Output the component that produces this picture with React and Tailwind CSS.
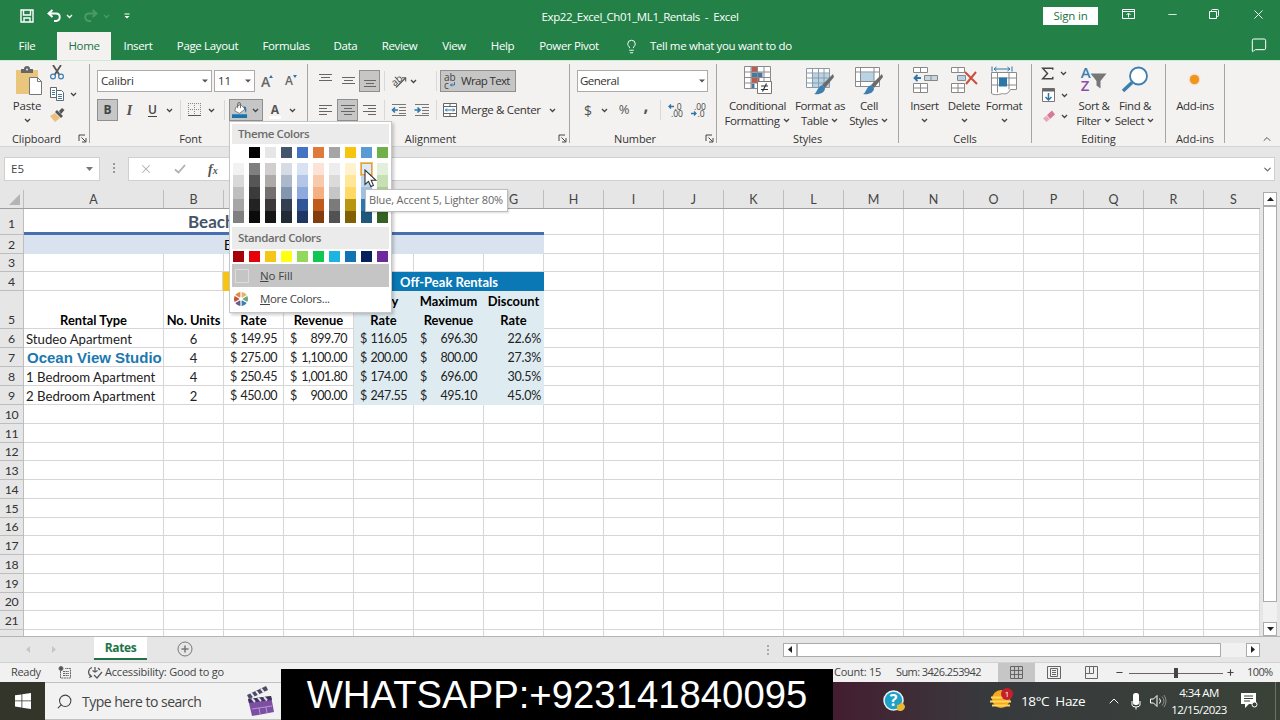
import { ChevronDown, ChevronUp, Lightbulb, MessageSquare, Minus, Plus, Search, X } from 'lucide-react'

const tabs = [
  ['File', 'w-[54px] mr-[3px] text-white'],
  ['Home', 'w-[54px] bg-[#f3f2f1] text-[#217346] font-medium'],
  ['Insert', 'w-[54px] text-white'],
  ['Page Layout', 'w-[85px] text-white'],
  ['Formulas', 'w-[72px] text-white'],
  ['Data', 'w-[47px] text-white'],
  ['Review', 'w-[61px] text-white'],
  ['View', 'w-[48px] text-white'],
  ['Help', 'w-[49px] text-white'],
  ['Power Pivot', 'w-[84px] text-white'],
]

const themeColors = [
  ['#ffffff', '#f2f2f2', '#d9d9d9', '#bfbfbf', '#a6a6a6', '#808080'],
  ['#000000', '#7f7f7f', '#565656', '#3b3b3b', '#222222', '#0b0b0b'],
  ['#e7e6e6', '#d0cece', '#aeaaa8', '#757070', '#3a3838', '#171616'],
  ['#44546a', '#d6dce4', '#acb9ca', '#8296b0', '#333f4f', '#222b35'],
  ['#4472c4', '#d9e2f3', '#b4c6e7', '#8ea9db', '#305496', '#203764'],
  ['#e07a3c', '#fbe4d5', '#f7caac', '#f4b083', '#c05a1a', '#833c0b'],
  ['#a5a5a5', '#ededed', '#dbdbdb', '#c6c6c6', '#7b7b7b', '#525252'],
  ['#f7c40e', '#fff2cc', '#ffe699', '#ffd966', '#b8960f', '#806000'],
  ['#5b9bd5', '#ddebf7', '#bdd7ee', '#9bc2e6', '#2f75b5', '#1f5878'],
  ['#70b04a', '#e2efda', '#c6e0b4', '#a9d08e', '#548235', '#356223'],
]

const standardColors = ['#a80008', '#e6000a', '#f5c518', '#ffff12', '#92d85a', '#12c653', '#1cb4e0', '#1173b4', '#06205c', '#6c2a9a']

const moreCols = ['H', 'I', 'J', 'K', 'L', 'M', 'N', 'O', 'P', 'Q', 'R']

const rentals = [
  [6, 'Studeo Apartment', '6', '149.95', '899.70', '116.05', '696.30', '22.6%'],
  [7, 'Ocean View Studio', '4', '275.00', '1,100.00', '200.00', '800.00', '27.3%'],
  [8, '1 Bedroom Apartment', '4', '250.45', '1,001.80', '174.00', '696.00', '30.5%'],
  [9, '2 Bedroom Apartment', '2', '450.00', '900.00', '247.55', '495.10', '45.0%'],
]

const Chev = ({ className = 'w-4' }) => (
  <span className={`flex justify-center shrink-0 ${className}`}>
    <svg width="7" height="5" viewBox="0 0 7 5" fill="none" stroke="#444" strokeWidth="1.3"><path d="M1 1l2.5 2.5L6 1" /></svg>
  </span>
)

const Caret = () => (
  <svg width="6" height="4" viewBox="0 0 6 4" fill="#555"><path d="M0 0.5h6L3 3.5z" /></svg>
)

const Launcher = () => (
  <svg width="9" height="9" viewBox="0 0 9 9" fill="none" stroke="#444"><path d="M1 7V1h6M3.5 3.5L7.5 7.5M8 4v4H4" /></svg>
)

const Sep = ({ className = '' }) => <div className={`w-px h-5 shrink-0 bg-[#d8d8d8] ${className}`} />

function Group({ label, launcher, className, children }) {
  return (
    <div className={`flex shrink-0 pt-[3px] ${className}`}>
      <div className="flex flex-col flex-1 min-w-0">
        <div className="h-[67px]">{children}</div>
        <div className="flex items-center h-[15px]">
          <span className="flex-1 text-center text-[11px] leading-none tracking-[-0.1px] text-[#333] whitespace-nowrap">{label}</span>
          {launcher && <span className="w-[16px] pl-[5px]"><Launcher /></span>}
        </div>
      </div>
      <div className="w-px h-[79px] bg-[#a5a5a5]" />
    </div>
  )
}

function Big({ icon, lines, chev = 'inline', className }) {
  return (
    <div className={`flex flex-col items-center shrink-0 text-[11.5px] leading-[15px] tracking-[-0.4px] text-[#333] whitespace-nowrap ${className}`}>
      <div className="h-[34px] pt-[2px]">{icon}</div>
      <span>{lines[0]}</span>
      {chev === 'below' && <span className="h-[15px] flex items-center"><Chev /></span>}
      {chev === 'inline' && <span className="flex items-center">{lines[1]}<Chev className="w-[9px] ml-[2px]" /></span>}
    </div>
  )
}

const Lines = ({ rows }) => (
  <svg width="14" height="16" viewBox="0 0 14 16" stroke="#666" strokeWidth="1">
    {rows.map(([x, y, w], i) => <path key={i} d={`M${x} ${y + 0.5}h${w}`} />)}
  </svg>
)

const DentIcon = ({ out }) => (
  <svg width="16" height="14" viewBox="0 0 16 14" fill="none">
    <path d="M1 1.5h14M8 4.5h7M8 7.5h7M8 10.5h7M1 12.5h14" stroke="#777" />
    <path d={out ? 'M7 7H1.5M4 4.5L1.5 7L4 9.5' : 'M0.5 7H6M3.5 4.5L6 7L3.5 9.5'} stroke="#2e75a8" strokeWidth="1.6" />
  </svg>
)

const Brush = () => (
  <>
    <path d="M27 8L28 11L19 22L16 19z" fill="#6b6b6b" />
    <path d="M16 19l3 3c0 5-6 7-11 6c3-1 3-7 8-9z" fill="#3d7fb0" />
  </>
)

const ClipboardGroup = () => (
  <Group label="Clipboard" launcher className="w-[90px]">
    <div className="flex pl-[9px]">
      <div className="w-9 flex flex-col items-center text-[11.5px] leading-[15px] tracking-[-0.2px] text-[#333]">
        <svg width="28" height="30" viewBox="0 0 28 30" className="mt-[2px] ml-[4px]">
          <path d="M1 4h22v24H1z" fill="#e9c67c" />
          <path d="M6 3h3a3 3 0 016 0h3v4H6z" fill="#666" />
          <circle cx="12" cy="3.5" r="1" fill="#eee" />
          <path d="M14.5 11.5h8l4 4v13h-12z" fill="#fff" stroke="#777" />
          <path d="M22.5 11.5v4h4" fill="none" stroke="#777" />
        </svg>
        <span className="mt-[2px]">Paste</span>
        <span className="h-[14px] flex items-center"><Chev /></span>
      </div>
      <div className="flex flex-col ml-[4px] gap-[7px] pt-[1px]">
        <svg width="16" height="15" viewBox="0 0 16 15" fill="none">
          <path d="M4 0l6.5 10M12 0L5.5 10" stroke="#555" strokeWidth="1.8" />
          <circle cx="4" cy="11.5" r="2.4" stroke="#3d7fb0" strokeWidth="1.2" />
          <circle cx="12" cy="11.5" r="2.4" stroke="#3d7fb0" strokeWidth="1.2" />
        </svg>
        <div className="flex items-center">
          <svg width="16" height="14" viewBox="0 0 16 14" fill="#fff" stroke="#666">
            <path d="M1.5 0.5h6v10h-6z" />
            <path d="M3 3.5h3M3 5.5h3M3 7.5h3" stroke="#3d7fb0" />
            <path d="M7.5 3.5h5l2 2v8h-7z" />
            <path d="M9 7.5h4M9 9.5h4M9 11.5h4" stroke="#3d7fb0" />
          </svg>
          <Chev />
        </div>
        <svg width="16" height="14" viewBox="0 0 16 14">
          <path d="M1 8l5-3l5 5l-5 4z" fill="#ecbf7d" />
          <path d="M6 4l2-2l6 6l-2 2zM10 3l3-3l2.5 2L12 6z" fill="#555" />
        </svg>
      </div>
    </div>
  </Group>
)

const FontGroup = () => (
  <Group label="Font" launcher className="w-[218px]">
    <div className="flex items-center h-[22px] mt-[6px] ml-[7px] text-[12px] text-[#333]">
      <div className="flex items-center justify-between w-[115px] h-[22px] px-[3px] bg-white border border-[#ababab] text-[11.5px] tracking-[-0.2px]">Calibri<Caret /></div>
      <div className="flex items-center justify-between w-[41px] h-[22px] px-[3px] ml-[2px] bg-white border border-[#ababab] text-[11.5px]">11<Caret /></div>
      <span className="flex items-center w-[25px] pl-[6px] text-[14px] font-semibold text-[#666]">A<svg width="4" height="3" fill="#2e75a8" className="-ml-px mb-[10px]"><path d="M0 3h4L2 0z" /></svg></span>
      <span className="flex items-center w-[20px] pl-[5px] text-[12px] font-semibold text-[#666]">A<svg width="4" height="3" fill="#2e75a8" className="mb-[10px]"><path d="M0 0h4L2 3z" /></svg></span>
    </div>
    <div className="flex items-center h-[22px] mt-[7px] ml-[7px] text-[13px] text-[#444]">
      <div className="flex items-center justify-center w-[21px] h-[22px] bg-[#c6c6c6] border border-[#8f8f8f] font-bold text-[12px]">B</div>
      <span className="w-[23px] text-center font-['Liberation_Serif'] text-[15px] italic font-semibold text-[#555]">I</span>
      <span className="w-[23px] text-center text-[12px] font-semibold underline underline-offset-2">U</span>
      <Chev className="w-[11px]" />
      <Sep className="ml-[5px]" />
      <svg width="14" height="14" viewBox="0 0 14 14" fill="none" stroke="#888" strokeDasharray="1 1" className="ml-[7px]">
        <path d="M.5 0v13M6.5 0v13M12.5 0v13M0 .5h13M0 6.5h13" />
        <path d="M0 12.500h13" stroke="#555" strokeDasharray="none" />
      </svg>
      <Chev className="w-[18px]" />
      <Sep className="ml-[4px]" />
      <div className="flex items-center w-[34px] h-[22px] ml-[4px] pl-[2px] bg-[#c6c6c6] border border-[#8f8f8f] shrink-0">
        <svg width="17" height="17" viewBox="0 0 17 17">
          <path d="M4 5l5-3l5 5l-6 4.500L3 9z" fill="#fff" stroke="#666" strokeWidth=".8" />
          <path d="M6 6V1.500a1.500 1.500 0 013 0V6" fill="none" stroke="#666" />
          <path d="M12.500 4c3 0 3 3 2.500 7c-1.500-1-1-4-2.500-5z" fill="#2e75a8" />
          <path d="M0 12.500h16v4H0z" fill="#1874ad" />
        </svg>
        <Chev className="w-[14px]" />
      </div>
      <span className="relative w-[24px] text-center text-[12px] font-bold text-[#555]">A<i className="absolute left-[6px] bottom-0 w-3 h-[3px] bg-white" /></span>
      <Chev className="w-[10px]" />
    </div>
  </Group>
)

const AlignmentGroup = () => (
  <Group label="Alignment" launcher className="w-[262px]">
    <div className="flex items-center h-[22px] mt-[6px] ml-[6px]">
      <span className="w-[22px] flex justify-center"><Lines rows={[[1, 1, 13], [3, 4, 9], [1, 7, 13]]} /></span>
      <span className="w-[23px] flex justify-center"><Lines rows={[[1, 4, 13], [3, 7, 9], [1, 10, 13]]} /></span>
      <span className="flex items-center justify-center w-[21px] h-[22px] bg-[#c6c6c6] border border-[#8f8f8f]"><Lines rows={[[1, 7, 12], [3, 10, 8], [1, 13, 12]]} /></span>
      <Sep className="ml-[4px]" />
      <svg width="16" height="16" viewBox="0 0 16 16" className="ml-[6px] overflow-visible">
        <text x="0" y="10" fontSize="10" fill="#444" transform="rotate(-40 6 9) translate(1 1)">ab</text>
        <path d="M5 14.500L14.500 5M11 4.800l3.700 0v3.700" fill="none" stroke="#555" strokeWidth="1.1" />
      </svg>
      <Chev className="w-[13px]" />
      <Sep className="ml-[16px]" />
      <div className="flex items-center w-[76px] h-[22px] ml-[3px] pl-[3px] bg-[#c6c6c6] border border-[#8f8f8f] text-[11.5px] tracking-[-0.65px] text-[#333] whitespace-nowrap">
        <span className="flex flex-col w-[15px] mr-[2px] text-[10px] leading-[8px] text-[#444] tracking-normal"><span>ab</span><span className="flex">c<svg width="5" height="6" fill="none" stroke="#2e75a8" className="mt-px ml-px"><path d="M4.500 0v3H.5M2 1.500L.5 3L2 4.500" /></svg></span></span>
        Wrap Text
      </div>
    </div>
    <div className="flex items-center h-[22px] mt-[7px] ml-[6px]">
      <span className="w-[22px] flex justify-center"><Lines rows={[[1, 3, 13], [1, 6, 8], [1, 9, 13], [1, 12, 8]]} /></span>
      <span className="flex items-center justify-center w-[21px] h-[22px] ml-px bg-[#c6c6c6] border border-[#8f8f8f]"><Lines rows={[[0, 3, 14], [3, 6, 8], [0, 9, 14], [3, 12, 8]]} /></span>
      <span className="w-[23px] flex justify-center"><Lines rows={[[0, 3, 13], [5, 6, 8], [0, 9, 13], [5, 12, 8]]} /></span>
      <Sep className="ml-[3px]" />
      <span className="w-[28px] flex justify-center"><DentIcon out /></span>
      <span className="w-[18px] flex justify-center"><DentIcon /></span>
      <Sep className="ml-[5px]" />
      <svg width="15" height="15" viewBox="0 0 15 15" fill="#fff" stroke="#666" className="ml-[6px]">
        <path d="M.5 .5h13v13H.5zM.5 3.500h13M.5 10.500h13M7 .5v3M7 10.500v3" />
        <path d="M2 7h10M4 5.500L2.500 7L4 8.500M10 5.500L11.500 7L10 8.500" stroke="#2e75a8" fill="none" />
      </svg>
      <span className="w-[81px] ml-[3px] text-[11.5px] tracking-[-0.35px] text-[#333] whitespace-nowrap">Merge &amp; Center</span>
      <Chev className="w-[20px]" />
    </div>
  </Group>
)

const NumberGroup = () => (
  <Group label="Number" launcher className="w-[147px]">
    <div className="flex items-center justify-between w-[131px] h-[22px] mt-[6px] ml-[7px] px-[2px] bg-white border border-[#ababab] text-[11.5px] tracking-[-0.5px] text-[#333]">General<Caret /></div>
    <div className="flex items-center h-[22px] mt-[7px] ml-[7px] text-[14px] text-[#555]">
      <span className="w-[22px] text-center text-[14px]">$</span>
      <Chev className="w-[10px]" />
      <span className="w-[30px] text-center text-[13px]">%</span>
      <span className="w-[14px] text-center text-[17px] font-bold leading-[10px] pb-[8px]">,</span>
      <Sep className="ml-[7px]" />
      <span className="w-[28px] flex flex-col items-center text-[8.5px] leading-[7px] text-[#444]"><span className="flex items-center"><svg width="6" height="5" fill="none" stroke="#2e75a8" strokeWidth="1.300"><path d="M6 2.500H1M3 .5l-2 2l2 2" /></svg>.0</span><span className="pl-1">.00</span></span>
      <span className="w-[18px] flex flex-col items-center text-[8.5px] leading-[7px] text-[#444]"><span className="pl-1">.00</span><span className="flex items-center"><svg width="6" height="5" fill="none" stroke="#2e75a8" strokeWidth="1.300"><path d="M0 2.500h5M3 .5l2 2l-2 2" /></svg>.0</span></span>
    </div>
  </Group>
)

const StylesGroup = () => (
  <Group label="Styles" className="w-[182px]">
    <div className="flex pl-[7px]">
      <Big className="w-[67px]" lines={['Conditional', 'Formatting']} icon={
        <svg width="28" height="29" viewBox="0 0 28 29">
          <path d="M.5 .5h26v22H.5z" fill="#fff" />
          <path d="M7.500 1h6v5h-6zM7.500 12h8v5h-8z" fill="#c25a4b" />
          <path d="M7.500 6.500h11v5h-11zM7.500 17.500h3v5h-3z" fill="#4479a4" />
          <path d="M.5 .5h26v22H.5zM.5 6h26M.5 11.500h26M.5 17h26M7 .5v22M13.500 .5v22M20 .5v22" fill="none" stroke="#8a8a8a" />
          <path d="M13.500 15.500h14v12h-14z" fill="#fff" stroke="#777" />
          <path d="M17 20h7M17 23.500h7M22.500 17.500l-4 8" stroke="#333" strokeWidth="1.2" />
        </svg>} />
      <Big className="w-[58px]" lines={['Format as', 'Table']} icon={
        <svg width="28" height="29" viewBox="0 0 28 29">
          <path d="M.5 2.500h23v19H.5z" fill="#fff" />
          <path d="M6.500 7.500h17v14h-17z" fill="#b9d3e6" />
          <path d="M.5 2.500h23v19H.5zM.5 7h23M.5 12h23M.5 17h23M6.500 2.500v19M12.500 2.500v19M18 2.500v19" fill="none" stroke="#8a9aa8" />
          <Brush />
        </svg>} />
      <Big className="w-[40px]" lines={['Cell', 'Styles']} icon={
        <svg width="28" height="29" viewBox="0 0 28 29">
          <path d="M.5 1.500h24v19H.5z" fill="#fff" />
          <path d="M6 6.500h13v9H6z" fill="#b9d3e6" />
          <path d="M.5 1.500h24v19H.5zM.5 6h24M.5 15.500h24M5.500 1.500v19M19 1.500v19" fill="none" stroke="#8a8a8a" />
          <Brush />
        </svg>} />
    </div>
  </Group>
)

const CellsGroup = () => (
  <Group label="Cells" className="w-[133px]">
    <div className="flex pl-[6px]">
      <Big className="w-[39px]" chev="below" lines={['Insert']} icon={
        <svg width="26" height="28" viewBox="0 0 26 28" fill="#fff" stroke="#888">
          <path d="M1.500 1.500h14v5h-14zM8.500 1.500v5M1.500 17.500h14v9h-14zM8.500 17.500v9M1.500 22h14" />
          <path d="M12.500 9.500h13v5h-13zM19 9.500v5" fill="#c6d6e2" />
          <path d="M9 12H2.500M5.500 9L2.500 12l3 3" stroke="#2e75a8" strokeWidth="1.800" fill="none" />
        </svg>} />
      <Big className="w-[40px]" chev="below" lines={['Delete']} icon={
        <svg width="28" height="28" viewBox="0 0 28 28" fill="#fff" stroke="#888">
          <path d="M1.500 1.500h13v5h-13zM8 1.500v5M1.500 17.500h13v9h-13zM8 17.500v9M1.500 22h13" />
          <path d="M7.500 9.500h8v5h-8z" fill="#b9d3e6" />
          <path d="M15 6l12 12M26 6L16 18" stroke="#c8503c" strokeWidth="2" />
        </svg>} />
      <Big className="w-[40px]" chev="below" lines={['Format']} icon={
        <svg width="28" height="30" viewBox="0 0 28 30" fill="#fff" stroke="#8a8a8a">
          <path d="M1.500 6.500h25v17h-6c-2 4-5 5-8 4c-3 1-8 2-11 0z" />
          <path d="M1.500 12h25M1.500 19h25M7.500 6.500v20M19 6.500v17" />
          <path d="M9 11.500h8v9H9z" fill="#2e75a8" stroke="none" />
          <path d="M2 .5v5M22 .5v5M4 3h16M6.500 1L4 3l2.500 2M17.500 1L20 3l-2.500 2" fill="none" stroke="#2e75a8" />
        </svg>} />
    </div>
  </Group>
)

const EditingGroup = () => (
  <Group label="Editing" className="w-[134px]">
    <div className="flex pl-[9px]">
      <div className="flex flex-col w-[32px] shrink-0 pt-[2px]">
        <div className="flex items-center h-[15px]">
          <svg width="16" height="15" viewBox="0 0 16 15" fill="none" stroke="#444" strokeWidth="1.800"><path d="M14.500 3V1H2l6 6.500L2 14h12.500v-2.500" /></svg>
          <Chev className="w-[19px]" />
        </div>
        <div className="flex items-center h-[15px] mt-[7px]">
          <svg width="14" height="15" viewBox="0 0 14 15" fill="#fff" className="ml-px">
            <path d="M.5 .5h12v13H.5z" stroke="#777" />
            <path d="M.5 .5h12v3H.5z" fill="#666" />
            <path d="M6.500 5v7M3.500 9l3 3l3-3" stroke="#2e75a8" strokeWidth="1.500" fill="none" />
          </svg>
          <Chev className="w-[16px]" />
        </div>
        <div className="flex items-center h-[14px] mt-[6px]">
          <svg width="14" height="13" viewBox="0 0 14 13" className="ml-px">
            <path d="M5 5l5-4.500l3 4l-5 4.500z" fill="#d67a98" />
            <path d="M1 8.500L4.500 5.500L7.500 9.500L4.500 12z" fill="#e6a9bb" />
          </svg>
          <Chev className="w-[16px]" />
        </div>
      </div>
      <Big className="w-[42px]" lines={['Sort &', 'Filter']} icon={
        <div className="flex">
          <div className="flex flex-col text-[15px] leading-[13px] font-semibold"><span className="text-[#3d7fb0]">A</span><span className="text-[#8a4fa8]">Z</span></div>
          <svg width="17" height="16" viewBox="0 0 17 16" className="mt-[7px]"><path d="M.5 .5h16L10.500 8v7.500l-4-3V8z" fill="#777" /></svg>
        </div>} />
      <Big className="w-[40px]" lines={['Find &', 'Select']} icon={
        <svg width="28" height="27" viewBox="0 0 28 27" fill="none" stroke="#3d7fb0">
          <circle cx="17.500" cy="10" r="8.500" fill="#fff" strokeWidth="1.800" />
          <path d="M11 16.500L2 25" strokeWidth="3.500" />
        </svg>} />
    </div>
  </Group>
)

const TitleBar = () => (
  <div className="flex items-center h-8 text-[11.5px] text-white">
    <svg width="14" height="14" viewBox="0 0 14 14" fill="none" stroke="#fff" strokeWidth="1.400" className="ml-[20px]"><path d="M1 1h12v12H1zM3.500 1v5h7V1M4 13V9h6v4" /></svg>
    <svg width="15" height="14" viewBox="0 0 15 14" fill="none" stroke="#fff" strokeWidth="1.900" className="ml-[13px]"><path d="M5.500 1L1.500 4.500L5.500 8M2 4.500h7c5 0 5 7 0 7.500H7" /></svg>
    <svg width="7" height="5" viewBox="0 0 7 5" fill="none" stroke="#fff" strokeWidth="1.300" className="ml-[4px]"><path d="M1 1l2.500 2.500L6 1" /></svg>
    <svg width="15" height="14" viewBox="0 0 15 14" fill="none" stroke="#4b9a68" strokeWidth="1.900" className="ml-[10px]"><path d="M9.500 1l4 3.500l-4 3.500M13 4.500H6c-5 0-5 7 0 7.500h2" /></svg>
    <svg width="7" height="5" viewBox="0 0 7 5" fill="none" stroke="#4b9a68" strokeWidth="1.300" className="ml-[5px]"><path d="M1 1l2.500 2.500L6 1" /></svg>
    <svg width="6" height="7" viewBox="0 0 6 7" fill="#fff" className="ml-[14px]"><path d="M.5 .5h5v1h-5zM.5 3h5L3 5.500z" /></svg>
    <div className="w-[280px] ml-[370px] pt-px text-center tracking-[-0.420px] whitespace-pre">Exp22_Excel_Ch01_ML1_Rentals  -  Excel</div>
    <div className="flex items-center justify-center w-[55px] h-[18px] ml-auto mr-[24px] bg-white text-[#217346] font-medium tracking-[-0.200px]">Sign in</div>
    <svg width="13" height="11" viewBox="0 0 13 11" fill="none" stroke="#fff" className="mr-[31px] mb-[3px]"><path d="M.5 .5h12v9H.5zM.5 2.500h12M6.500 8.500V4.500M4.500 6l2-2l2 2" /></svg>
    <Minus size={13} strokeWidth={1.500} className="mr-[30px] mb-[3px]" />
    <svg width="11" height="11" viewBox="0 0 11 11" fill="none" stroke="#fff" className="mr-[31px] mb-[3px]"><path d="M.5 2.500h7v7h-7zM2.500 2.500V1.500q0-1 1-1h5q1 0 1 1v5q0 1-1 1h-1" /></svg>
    <X size={15} strokeWidth={1.500} className="mr-[14px] mb-[3px]" />
  </div>
)

const TabRow = () => (
  <div className="flex items-stretch h-7 text-[11.5px] tracking-[-0.350px]">
    {tabs.map(([t, cls]) => (
      <div key={t} className={`flex items-center justify-center whitespace-nowrap ${cls}`}>{t}</div>
    ))}
    <div className="flex items-center text-white">
      <Lightbulb size={15} strokeWidth={1.500} className="ml-[13px] mr-[11px]" />
      Tell me what you want to do
    </div>
    <MessageSquare size={16} strokeWidth={1.500} className="ml-auto mr-[13px] mt-[5px] text-white" />
  </div>
)

const FormulaBar = () => (
  <div className="flex items-start h-[43px] pt-[10px] pl-[4px] bg-[#e6e6e6]">
    <div className="flex items-center justify-between w-[96px] h-6 px-[6px] bg-white border border-[#d0d0d0] text-[11.500px] text-[#444]">
      E5
      <svg width="7" height="4" viewBox="0 0 7 4" fill="#777"><path d="M0 0h7L3.500 4z" /></svg>
    </div>
    <svg width="3" height="12" viewBox="0 0 3 12" fill="#999" className="mt-[6px] ml-[13px]"><path d="M0 0h2v2H0zM0 4h2v2H0zM0 8h2v2H0z" /></svg>
    <div className="flex items-center w-[1147px] h-6 ml-[12px] bg-white border border-[#d0d0d0]">
      <X size={14} strokeWidth={1.800} className="ml-[10px] text-[#b0b0b0]" />
      <svg width="12" height="10" viewBox="0 0 12 10" fill="none" stroke="#b0b0b0" strokeWidth="1.800" className="ml-[21px]"><path d="M1 5.500l3.500 3L11 1" /></svg>
      <span className="ml-[22px] font-['Liberation_Serif'] text-[14px] italic font-bold text-[#555]">f<span className="text-[10px]">x</span></span>
      <ChevronDown size={11} strokeWidth={2.500} className="ml-auto mr-[1px] text-[#666]" />
    </div>
  </div>
)

const RowHead = ({ children }) => (
  <div className="flex items-end justify-center w-6 shrink-0 border-r border-b border-[#bdbdbd] text-[12.300px] leading-[16px] tracking-[-0.300px] text-[#333]">{children}</div>
)

const Blank = ({ className }) => <div className={`shrink-0 border-r border-b border-[#d6d6d6] ${className}`} />

// H to R plus the clipped column S
const Rest = () => (
  <>
    {moreCols.map((c) => <Blank key={c} className="w-[60px]" />)}
    <Blank className="w-[56px]" />
  </>
)

const Head = ({ top, bottom, className }) => (
  <div className={`flex flex-col items-center shrink-0 pt-px border-r border-b font-bold text-black leading-[19px] whitespace-nowrap ${className}`}>
    <span className="h-[19px]">{top}</span>
    <span className="h-[17px]">{bottom}</span>
  </div>
)

const Money = ({ value, className }) => (
  <div className={`flex items-end justify-between shrink-0 border-r border-b pr-[6px] text-[12.500px] tracking-[-0.450px] ${className}`}>
    <span>$</span>
    <span>{value}</span>
  </div>
)

const PLAIN = 'border-[#d6d6d6]'
const TINT = 'bg-[#deecf2] border-[#deecf2]'

const Sheet = () => (
  <div className="flex h-[446px] bg-[#e6e6e6]">
    <div className="w-[1260px] overflow-hidden font-['Lato','Liberation_Sans',sans-serif] text-[13px] leading-[16px]">
      <div className="flex h-[19px] border-b border-[#9e9e9e] text-[12.500px] leading-[19px] text-[#444]">
        <div className="flex items-end justify-end w-6 p-[3px] border-r border-[#bdbdbd]">
          <svg width="11" height="11" viewBox="0 0 11 11" fill="#b5b5b5"><path d="M11 0v11H0z" /></svg>
        </div>
        <div className="w-[140px] text-center border-r border-[#bdbdbd]">A</div>
        <div className="w-[60px] text-center border-r border-[#bdbdbd]">B</div>
        <div className="w-[60px] border-r border-[#bdbdbd]" />
        <div className="w-[70px] border-r border-[#bdbdbd]" />
        <div className="w-[60px] border-r border-[#bdbdbd]" />
        <div className="w-[70px] border-r border-[#bdbdbd]" />
        <div className="w-[60px] text-center border-r border-[#bdbdbd]">G</div>
        {moreCols.map((c) => <div key={c} className="w-[60px] text-center border-r border-[#bdbdbd]">{c}</div>)}
        <div className="w-[56px] pl-[3px] text-center">S</div>
      </div>
      <div className="flex h-[26px]">
        <RowHead><span className="mb-[2px]">1</span></RowHead>
        <div className="w-[520px] shrink-0 pl-[164px] pt-[5px] bg-white border-b-[3px] border-[#4a6fb0] text-[17px] font-bold text-[#44546a]">Beach</div>
        <div className="flex bg-white"><Rest /></div>
      </div>
      <div className="flex h-[19px]">
        <RowHead>2</RowHead>
        <div className="w-[520px] shrink-0 pl-[200px] pt-[2px] bg-[#d9e2ef] text-black">E</div>
        <div className="flex bg-white"><Rest /></div>
      </div>
      <div className="flex h-[18px]">
        <RowHead>3</RowHead>
        <div className="flex bg-white">
          <Blank className="w-[140px]" /><Blank className="w-[60px]" /><Blank className="w-[60px]" /><Blank className="w-[70px]" />
          <Blank className="w-[60px]" /><Blank className="w-[70px]" /><Blank className="w-[60px]" />
          <Rest />
        </div>
      </div>
      <div className="flex h-[19px]">
        <RowHead>4</RowHead>
        <div className="flex bg-white">
          <Blank className="w-[140px]" /><Blank className="w-[59px]" />
          <div className="w-[131px] bg-[#f7c40e]" />
          <div className="flex items-end justify-center w-[190px] pb-px bg-[#0a78b5] font-bold text-white text-[13px]">Off-Peak Rentals</div>
          <Rest />
        </div>
      </div>
      <div className="flex h-[38px]">
        <RowHead>5</RowHead>
        <div className="flex bg-white text-[12.900px]">
          <Head bottom="Rental Type" className="w-[140px] border-[#d6d6d6]" />
          <Head bottom="No. Units" className="w-[60px] border-[#d6d6d6]" />
          <Head bottom="Rate" className="w-[60px] border-[#d6d6d6]" />
          <Head bottom="Revenue" className="w-[70px] border-[#d6d6d6]" />
          <Head top="Daily" bottom="Rate" className="w-[60px] border-[#deecf2] bg-[#deecf2]" />
          <Head top="Maximum" bottom="Revenue" className="w-[70px] border-[#deecf2] bg-[#deecf2]" />
          <Head top="Discount" bottom="Rate" className="w-[60px] border-[#deecf2] bg-[#deecf2]" />
          <Rest />
        </div>
      </div>
      {rentals.map(([n, name, units, daily, max, offDaily, offMax, disc]) => (
        <div key={n} className="flex h-[19px] text-[#222]">
          <RowHead>{n}</RowHead>
          <div className="flex bg-white">
            <div className={`flex items-end w-[140px] shrink-0 border-r border-b border-[#d6d6d6] whitespace-nowrap ${n === 7 ? "font-['Liberation_Sans'] font-bold text-[15px] text-[#1c78b0] pl-[3px]" : 'pl-[2px] text-[13.200px]'}`}>{name}</div>
            <div className="flex items-end justify-center w-[60px] shrink-0 border-r border-b border-[#d6d6d6]">{units}</div>
            <Money value={daily} className={`w-[60px] pl-[6px] ${PLAIN}`} />
            <Money value={max} className={`w-[70px] pl-[6px] ${PLAIN}`} />
            <Money value={offDaily} className={`w-[60px] pl-[6px] ${TINT}`} />
            <Money value={offMax} className={`w-[70px] pl-[6px] ${TINT}`} />
            <div className={`flex items-end justify-end w-[60px] shrink-0 pr-[2px] border-r border-b text-[12.500px] tracking-[-0.250px] ${TINT}`}>{disc}</div>
            <Rest />
          </div>
        </div>
      ))}
      {[10, 11, 12, 13, 14, 15, 16, 17, 18, 19, 20, 21, 22].map((n) => (
        <div key={n} className="flex h-[18.750px]">
          <RowHead>{n < 22 ? n : ''}</RowHead>
          <div className="flex bg-white">
            <Blank className="w-[140px]" /><Blank className="w-[60px]" /><Blank className="w-[60px]" /><Blank className="w-[70px]" />
            <Blank className="w-[60px]" /><Blank className="w-[70px]" /><Blank className="w-[60px]" />
            <Rest />
          </div>
        </div>
      ))}
    </div>
    <div className="flex flex-col w-[14px] ml-[3px] pt-[2px]">
      <div className="flex items-center justify-center h-[14px] bg-white border border-[#ababab]"><svg width="7" height="4" fill="#222"><path d="M0 4h7L3.500 0z" /></svg></div>
      <div className="h-[396px] bg-white border border-[#ababab]" />
      <div className="flex-1 bg-[#f1f1f1]" />
      <div className="flex items-center justify-center h-[14px] bg-white border border-[#ababab]"><svg width="7" height="4" fill="#222"><path d="M0 0h7L3.500 4z" /></svg></div>
    </div>
  </div>
)

const SheetTabs = () => (
  <div className="flex items-center h-[26px] bg-[#e6e6e6] border-t border-[#b5b5b5]">
    <svg width="4" height="7" fill="#c6c6c6" className="ml-[26px]"><path d="M4 0v7L0 3.500z" /></svg>
    <svg width="4" height="7" fill="#c6c6c6" className="ml-[22px]"><path d="M0 0v7L4 3.500z" /></svg>
    <div className="flex items-center justify-center self-start w-[53px] h-[23px] ml-[38px] bg-white border-b-2 border-[#217346] text-[12px] tracking-[-0.400px] font-bold text-[#217346]">Rates</div>
    <svg width="16" height="16" viewBox="0 0 16 16" fill="none" stroke="#777" className="ml-[30px] mb-px"><circle cx="8" cy="8" r="7" /><path d="M8 4.500v7M4.500 8h7" strokeWidth="1.500" /></svg>
    <svg width="3" height="10" fill="#aaa" className="ml-auto mr-[13px]"><path d="M0 0h2v2H0zM0 4h2v2H0zM0 8h2v2H0z" /></svg>
    <div className="flex items-center justify-center w-[14px] h-[14px] bg-white border border-[#ababab]"><svg width="4" height="7" fill="#222"><path d="M4 0v7L0 3.500z" /></svg></div>
    <div className="w-[424px] h-[14px] bg-white border border-[#ababab]" />
    <div className="w-[25px] h-[14px] bg-[#f1f1f1]" />
    <div className="flex items-center justify-center w-[14px] h-[14px] mr-[20px] bg-white border border-[#ababab]"><svg width="4" height="7" fill="#222"><path d="M0 0v7L4 3.500z" /></svg></div>
  </div>
)

const StatusBar = () => (
  <div className="flex items-center h-5 bg-[#f1f1f1] border-t border-[#d2d2d2] text-[11px] text-[#444] whitespace-nowrap">
    <span className="w-[46px] pl-[11px] tracking-[-0.300px]">Ready</span>
    <svg width="14" height="13" viewBox="0 0 14 13" fill="none" stroke="#666" className="ml-[12px]">
      <path d="M2.500 5v7h10V2.500H7M5 5.500h6M5 7.500h6M5 9.500h6" strokeDasharray="2 .6" /><circle cx="3" cy="2.500" r="2" fill="#555" />
    </svg>
    <svg width="16" height="13" viewBox="0 0 16 13" fill="none" stroke="#555" strokeWidth="1.200" className="ml-[15px]">
      <path d="M5 1.500a5 5 0 00-1 9M3 8.500l1.500 2L2 11.500M8 1v4M5.500 4.500L8 6l2.500-1.500M7 9l3 3l5-6M11 2l2 2" />
    </svg>
    <span className="ml-[2px] tracking-[-0.200px]">Accessibility: Good to go</span>
    <span className="w-[48px] ml-auto mr-[14px] tracking-[-0.250px]">Count: 15</span>
    <span className="w-[88px] mr-[14px] tracking-[-0.600px]">Sum: 3426.253942</span>
    <div className="flex items-center justify-center w-[37px] h-[19px] bg-[#c6c6c6]">
      <svg width="13" height="13" fill="none" stroke="#666"><path d="M.5 .5h12v12H.5zM4.500 .5v12M8.500 .5v12M.5 4.500h12M.5 8.500h12" /></svg>
    </div>
    <svg width="14" height="13" fill="none" stroke="#666" className="ml-[12px]"><path d="M.5 .5h13v12H.5zM3.500 2.500h7v8h-7zM5 4.500h4M5 6.500h4M5 8.500h4" /></svg>
    <svg width="13" height="13" fill="none" stroke="#666" className="ml-[24px]"><path d="M.5 .5h12v12H.5zM4.500 .5v7h-4M4.500 7.500h4V.5" /></svg>
    <Minus size={9} strokeWidth={3} className="ml-[17px]" />
    <svg width="94" height="12" className="ml-[5px]"><path d="M0 6.500h94" stroke="#666" /><path d="M45 1h4v10h-4z" fill="#444" /></svg>
    <Plus size={9} strokeWidth={3} className="ml-[3px]" />
    <span className="w-[33px] ml-[12px] tracking-[-0.600px]">100%</span>
  </div>
)

const Taskbar = () => (
  <div className="flex items-center h-[38px] bg-linear-to-r from-[#431c30] from-65% via-[#373a3d] via-77% to-[#3a4238] text-white">
    <div className="flex items-center justify-center w-[45px] h-full bg-[#34352a]">
      <svg width="16" height="16" viewBox="0 0 16 16" fill="#fff"><path d="M0 2.300l6.500-.9v6.100H0zM7.300 1.300L16 0v7.500H7.300zM0 8.300h6.500v6.100L0 13.500zM7.300 8.300H16V16l-8.700-1.300z" /></svg>
    </div>
    <div className="flex items-center w-[236px] h-full bg-[#f2f2f2] border-y border-[#c0c0c0] text-[14px] text-[#444]">
      <Search size={17} strokeWidth={1.500} className="ml-[11px] -scale-x-100" />
      <span className="w-[121px] ml-[9px] tracking-[-0.500px] whitespace-nowrap">Type here to search</span>
      <svg width="30" height="32" viewBox="0 0 30 32" className="ml-[43px]">
        <path d="M1 10L20 1l2 4L3 14z" fill="#4d4a68" />
        <path d="M5 8l3 4M10 6l3 4M15 3.500l3 4" stroke="#eee" strokeWidth="2" />
        <path d="M2 14l23-3l3 16l-22 4z" fill="#7d4fa3" />
        <path d="M2 14l23-3l1 4L3 18z" fill="#3f3458" />
        <path d="M6 13.500l3 3.500M12 12.700l3 3.500M18 12l3 3.500" stroke="#e4dff0" strokeWidth="2" />
        <path d="M6 24l20-3M13 23l1 6M20 22l1 6" stroke="#b994d4" />
      </svg>
    </div>
    <svg width="23" height="24" viewBox="0 0 23 24" className="ml-auto mr-[84px] mt-[2px]">
      <circle cx="10.500" cy="10.500" r="9.500" fill="#1ea0c8" stroke="#e8f6fb" strokeWidth="1.500" />
      <text x="10.500" y="16" textAnchor="middle" fontSize="16" fontWeight="700" fill="#fff">?</text>
      <path d="M14 15c2 0 4-2 5-3l3 4c0 5-5 6-8 4z" fill="#eab930" />
    </svg>
    <svg width="24" height="22" viewBox="0 0 24 22" className="mb-[4px]">
      <circle cx="11" cy="11" r="9" fill="#f4a91f" />
      <path d="M1 9.500h19M0 13.500h21M2 17.500h18" stroke="#ffd55c" strokeWidth="2" />
      <circle cx="17" cy="6" r="6" fill="#c3202c" />
      <text x="17" y="9" textAnchor="middle" fontSize="8" fill="#fff">1</text>
    </svg>
    <span className="w-[92px] pl-[7px] text-[13.500px] tracking-[-0.400px] whitespace-pre">18°C  Haze</span>
    <ChevronUp size={16} strokeWidth={1.500} />
    <svg width="10" height="17" viewBox="0 0 10 17" className="ml-[9px]"><rect x="2" y="0" width="6" height="12" rx="2.500" fill="#fff" /><path d="M1 8v4q0 2 4 2t4-2V8M5 14v2.500" fill="none" stroke="#fff" /></svg>
    <svg width="17" height="14" viewBox="0 0 17 14" fill="none" stroke="#fff" className="ml-[9px]"><path d="M.5 5h3l3.500-3.500v11L3.500 9h-3zM9.500 4.500q2 2.500 0 5" /><path d="M12 2.500q4 4.500 0 9M14 1q4 6 0 12" stroke="#8a8f8a" /></svg>
    <div className="flex flex-col items-center w-[60px] ml-[2px] text-[11.500px] leading-[17px] tracking-[-0.550px] whitespace-nowrap"><span>4:34 AM</span><span>12/15/2023</span></div>
    <svg width="17" height="16" viewBox="0 0 17 16" className="ml-[12px] mr-[17px]">
      <path d="M0 0h15v11h-7l-4 4v-4H0z" fill="#fff" />
      <path d="M3 3h9M3 5.500h9M3 8h6" stroke="#3a4238" />
      <circle cx="13.500" cy="11.500" r="2.500" fill="#3a4238" stroke="#fff" />
    </svg>
    <div className="w-px h-full bg-[#6b716b] mr-[4px]" />
  </div>
)

const FillMenu = () => (
  <div className="absolute left-[229px] top-[121px] w-[163px] h-[192px] p-[2px] bg-white border border-[#c6c6c6] shadow-[2px_2px_3px_rgba(0,0,0,0.2)] text-[11.500px] text-[#444]">
    <div className="flex items-center h-[20px] pl-[6px] bg-[#ebebeb] font-semibold tracking-[-0.400px] text-[#6b6b6b]">Theme Colors</div>
    <div className="flex gap-[5px] pl-px pt-[3px] h-[83px]">
      {themeColors.map((col, i) => (
        <div key={i} className="w-[11px] shrink-0">
          <div className="h-[11px] mb-[5px]" style={{ background: col[0] }} />
          {col.slice(1).map((c, j) => (
            <div key={j} className={`h-3 ${i === 8 && j === 0 ? 'border border-[#e0a040] outline outline-[#f0c070]' : ''}`} style={{ background: c }} />
          ))}
        </div>
      ))}
    </div>
    <div className="flex items-center h-[22px] pl-[6px] bg-[#ebebeb] font-semibold tracking-[-0.400px] text-[#6b6b6b]">Standard Colors</div>
    <div className="flex gap-[5px] pl-px pt-[2px] h-[15px]">
      {standardColors.map((c) => <div key={c} className="w-[11px] h-[11px] shrink-0" style={{ background: c }} />)}
    </div>
    <div className="flex items-center h-[23px] pl-[3px] bg-[#c5c5c5]">
      <div className="w-[14px] h-[14px] border border-[#dcdcdc] mr-[11px]" />
      <span className="tracking-[-0.100px]"><u>N</u>o Fill</span>
    </div>
    <div className="flex items-center h-[23px] pl-[2px]">
      <svg width="14" height="14" viewBox="0 0 14 14" className="mr-[12px]">
        <path d="M7 7V0a7 7 0 016 3.500z" fill="#e3b36a" />
        <path d="M7 7l6-3.500a7 7 0 010 7z" fill="#6aa77a" />
        <path d="M7 7l6 3.500A7 7 0 017 14z" fill="#3d7fb0" />
        <path d="M7 7v7a7 7 0 01-6-3.500z" fill="#6b5f8a" />
        <path d="M7 7l-6 3.500a7 7 0 010-7z" fill="#c8503c" />
        <path d="M7 7L1 3.500A7 7 0 017 0z" fill="#e08a4a" />
        <path d="M7 0v14M1 3.500l12 7M13 3.500l-12 7" stroke="#fff" strokeWidth="1.200" />
        <circle cx="7" cy="7" r="1.800" fill="#fff" />
      </svg>
      <span className="tracking-[-0.350px]"><u>M</u>ore Colors...</span>
    </div>
  </div>
)

export default function App() {
  return (
    <div className="relative w-[1280px] h-[720px] overflow-hidden bg-[#e6e6e6] font-['Open_Sans','Noto_Sans',sans-serif]">
      <div className="bg-[#238147]">
        <TitleBar />
        <TabRow />
      </div>
      <div className="flex h-[87px] bg-[#f3f2f1] border-t border-t-[#c9ecd2] border-b border-b-[#d5d5d5]">
        <ClipboardGroup />
        <FontGroup />
        <AlignmentGroup />
        <NumberGroup />
        <StylesGroup />
        <CellsGroup />
        <EditingGroup />
        <Group label="Add-ins" className="w-[59px]">
          <Big className="w-[58px]" chev="none" lines={['Add-ins']} icon={<div className="w-[9px] h-[9px] mt-[9px] -ml-[2px] rounded-full bg-[#f0941e] shadow-[0_0_2px_#f0941e]" />} />
        </Group>
        <ChevronUp size={12} strokeWidth={2} className="ml-auto mr-[7px] self-end mb-[1px] text-[#555]" />
      </div>
      <FormulaBar />
      <Sheet />
      <SheetTabs />
      <StatusBar />
      <Taskbar />
      <FillMenu />
      <div className="absolute left-[365px] top-[189px] flex items-center w-[143px] h-[23px] pl-[3px] bg-white border border-[#bebebe] shadow-[1px_1px_2px_rgba(0,0,0,0.15)] text-[11px] tracking-[-0.150px] text-[#666] whitespace-nowrap">Blue, Accent 5, Lighter 80%</div>
      <svg width="13" height="19" viewBox="0 0 13 19" className="absolute left-[364px] top-[169px]"><path d="M1 1v14.500l3.500-3.200l2.300 5.200l2.600-1.100L7.200 11.300H12z" fill="#fff" stroke="#333" strokeWidth="1.100" /></svg>
      <div className="absolute left-[281px] top-[669px] flex items-center justify-center w-[552px] h-[51px] pt-px bg-black font-['Liberation_Sans',sans-serif] text-[38.300px] text-white">WHATSAPP:+923141840095</div>
    </div>
  )
}
